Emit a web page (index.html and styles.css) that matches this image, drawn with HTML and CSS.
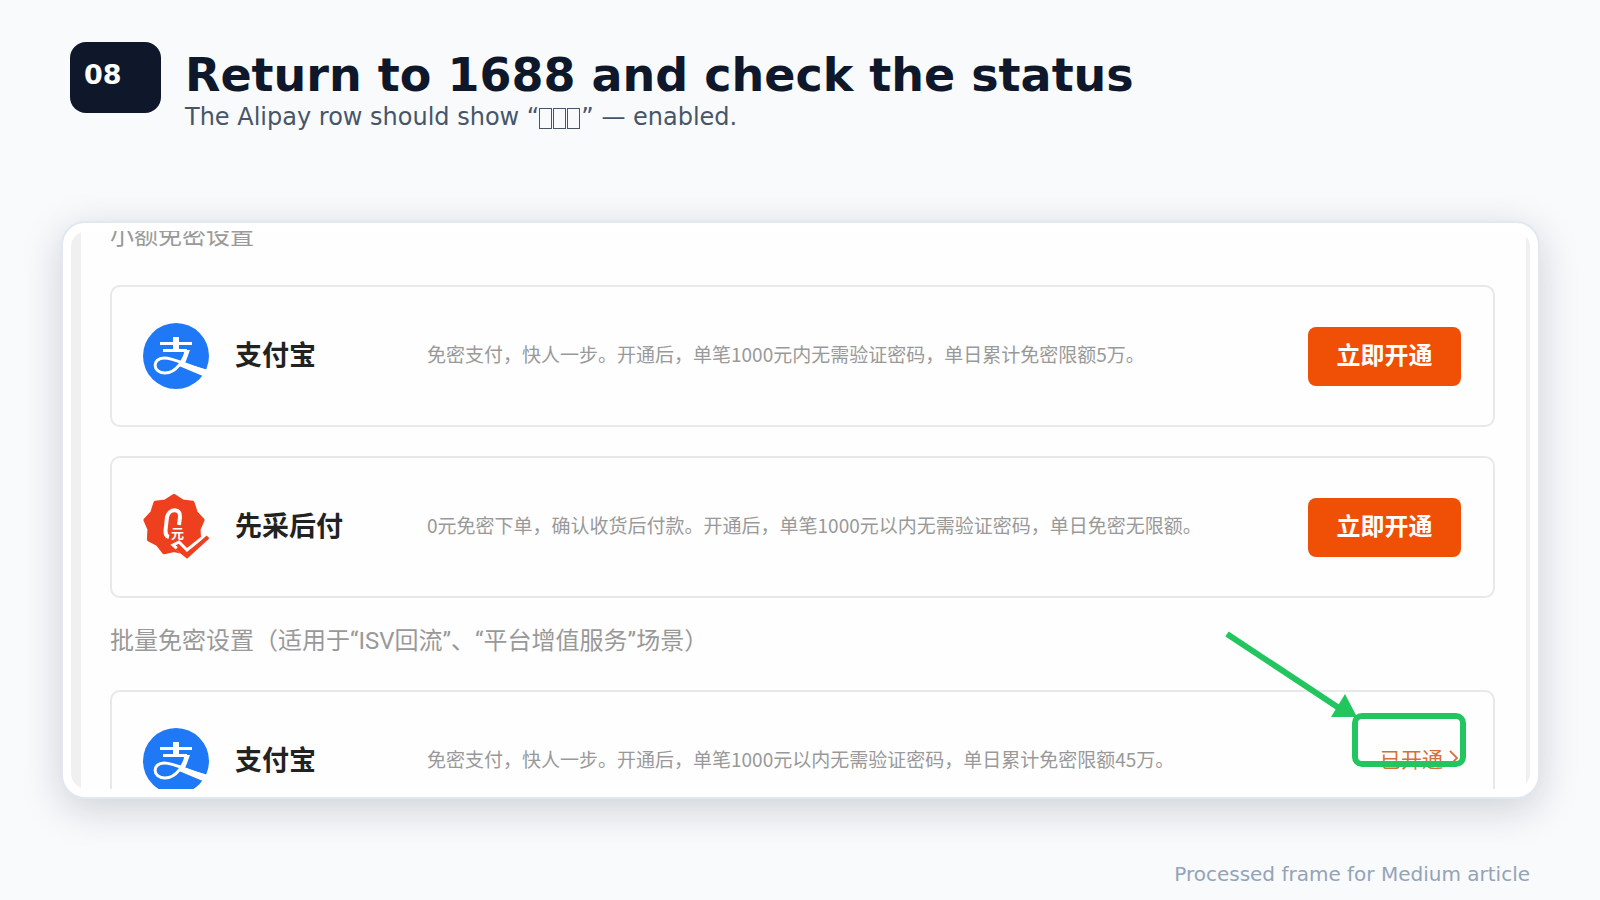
FILE: index.html
```html
<!DOCTYPE html>
<html lang="en">
<head>
    <meta charset="UTF-8">
    <meta name="viewport" content="width=device-width, initial-scale=1.0">
    <title>Return to 1688 and check the status</title>
    <link rel="stylesheet" href="styles.css">
</head>
<body>
    <header class="header">
        <div class="step">08</div>
        <div class="titles">
            <h1>Return to 1688 and check the status</h1>
            <p>The Alipay row should show “<span class="box"></span><span class="box"></span><span class="box"></span>” — enabled.</p>
        </div>
    </header>

    <main class="card">
        <div class="shot" lang="zh-CN">
            <h2>小额免密设置</h2>
            <section class="row">
                <svg class="icon" viewBox="0 0 66 66" aria-hidden="true">
                    <circle cx="33" cy="33" r="33" fill="#1f78f5"/>
                    <path d="M17 20.5H49M20 27.500H44" fill="none" stroke="#fff" stroke-width="3"/>
                    <path d="M30 14h6v14h-6z" fill="#fff"/>
                    <path d="M44 27C41 36 34 50 22 50C9 50 9 35 21 35C31 35 40 41 62 48" fill="none" stroke="#fff" stroke-width="3"/>
                    <path d="M41 27h6C45 32 44 36 42 40L65 47L61 53.500L36 43C40 37 41 33 41 27z" fill="#fff"/>
                </svg>
                <h3>支付宝</h3>
                <p>免密支付，快人一步。开通后，单笔1000元内无需验证密码，单日累计免密限额5万。</p>
                <button type="button" class="open-btn">立即开通</button>
            </section>
            <section class="row">
                <svg class="icon" viewBox="0 0 66 66" aria-hidden="true">
                    <path d="M31 2L39.600 7.500L49.600 8.800L52.700 18.500L59.600 26L55.600 35.300L56.100 45.500L47.100 50.200L40.900 58.300L31 56L21.100 58.300L14.900 50.200L5.900 45.500L6.400 35.300L2.400 26L9.300 18.500L12.400 8.800L22.400 7.500z" fill="#ee3f1f" stroke="#ee3f1f" stroke-width="4" stroke-linejoin="round"/>
                    <path d="M26 43C22 42 22 38 23 32L24 23C26 14 38 14 37 23L36 31" fill="none" stroke="#fff" stroke-width="4"/>
                    <text class="yuan" x="28" y="44">元</text>
                    <path d="M30 51L36 48L44 56L64 40L66 43L45 64z" fill="#ee3f1f" stroke="#fff" stroke-width="3"/>
                    <path d="M34 54L44 62L65 43" fill="none" stroke="#ee3f1f" stroke-width="4"/>
                </svg>
                <h3>先采后付</h3>
                <p>0元免密下单，确认收货后付款。开通后，单笔1000元以内无需验证密码，单日免密无限额。</p>
                <button type="button" class="open-btn">立即开通</button>
            </section>

            <h2>批量免密设置（适用于“ISV回流”、“平台增值服务”场景）</h2>
            <section class="row">
                <svg class="icon" viewBox="0 0 66 66" aria-hidden="true">
                    <circle cx="33" cy="33" r="33" fill="#1f78f5"/>
                    <path d="M17 20.5H49M20 27.500H44" fill="none" stroke="#fff" stroke-width="3"/>
                    <path d="M30 14h6v14h-6z" fill="#fff"/>
                    <path d="M44 27C41 36 34 50 22 50C9 50 9 35 21 35C31 35 40 41 62 48" fill="none" stroke="#fff" stroke-width="3"/>
                    <path d="M41 27h6C45 32 44 36 42 40L65 47L61 53.500L36 43C40 37 41 33 41 27z" fill="#fff"/>
                </svg>
                <h3>支付宝</h3>
                <p>免密支付，快人一步。开通后，单笔1000元以内无需验证密码，单日累计免密限额45万。</p>
                <a href="#" class="status">已开通
                    <svg viewBox="0 0 10 18" aria-hidden="true"><path d="M1 1L9 9L1 17" fill="none" stroke="currentColor" stroke-width="2"/></svg>
                </a>
            </section>

            <!-- highlight drawn over the status link -->
            <svg class="marker" viewBox="0 0 270 160" aria-hidden="true">
                <path d="M17 14L132 90" stroke="#22c55e" stroke-width="6"/>
                <path d="M135 74L121 97H147z" fill="#22c55e"/>
                <rect x="145" y="96" width="108" height="48" rx="7" fill="none" stroke="#22c55e" stroke-width="6"/>
            </svg>
        </div>
    </main>

    <footer class="footer">Processed frame for Medium article</footer>
</body>
</html>
```

FILE: styles.css
```css
* {
    box-sizing: border-box;
}

body {
    display: flex;
    flex-direction: column;
    height: 100vh;
    margin: 0;
    padding: 42px 60px 12px;
    background-color: #f8fafc;
    color: #0f172a;
    font-family: "DejaVu Sans", sans-serif;
}

h1, h2, h3, p {
    margin: 0;
}

.header {
    display: flex;
    gap: 24px;
    padding-left: 10px;
    margin-bottom: 89px;
}

.step {
    width: 91px;
    height: 71px;
    padding: 17px 14px;
    border-radius: 16px;
    background-color: #0f172a;
    color: #fff;
    font-size: 27px;
    font-weight: bold;
    line-height: 32px;
}

.titles {
    padding-top: 6px;
}

h1 {
    font-size: 46px;
    line-height: 54px;
}

.titles p {
    color: #475569;
    font-size: 24px;
    line-height: 30px;
}

.box {
    display: inline-block;
    width: 13px;
    height: 21px;
    margin-right: 1px;
    border: 1px solid #475569;
    vertical-align: -4px;
}

.card {
    flex: 1;
    min-height: 0;
    margin: 0 0 1px 1px;
    padding: 8px;
    border: 2px solid #e2e8f0;
    border-radius: 24px;
    background-color: #fff;
    box-shadow: 0 10px 40px rgba(15, 23, 42, 0.18);
}

/* clipped page inside the card */
.shot {
    position: relative;
    height: 100%;
    padding: 0 35px 0 39px;
    overflow: hidden;
    border-radius: 16px;
    background: linear-gradient(90deg, #f0f0f0 10px, #fefefe 10px, #fefefe calc(100% - 4px), #f0f0f0 calc(100% - 4px));
    font-family: "Noto Sans CJK SC", sans-serif;
}

h2 {
    margin: 27px 0 33px;
    color: #999;
    font-family: Roboto, "Noto Sans CJK SC", sans-serif;
    font-size: 24px;
    font-weight: normal;
    line-height: 32px;
}

h2:first-child {
    margin-top: -11px;
}

.row {
    display: grid;
    grid-template-columns: 92px 192px 1fr auto;
    align-items: center;
    height: 142px;
    padding: 0 32px 0 31px;
    border: 2px solid #e8e8e8;
    border-radius: 10px;
}

.row + .row {
    margin-top: 29px;
}

.icon {
    width: 66px;
    height: 66px;
}

.yuan {
    fill: #fff;
    font-size: 13px;
    font-weight: bold;
}

h3 {
    padding-bottom: 4px;
    color: #222;
    font-size: 27px;
    line-height: 36px;
}

.row p {
    padding-bottom: 4px;
    color: #999;
    font-size: 19px;
    line-height: 28px;
    white-space: nowrap;
}

.open-btn {
    width: 153px;
    height: 59px;
    padding: 0 0 6px;
    border: 0;
    border-radius: 8px;
    background-color: #f05005;
    color: #fff;
    font-family: inherit;
    font-size: 24px;
    font-weight: bold;
}

.status {
    display: flex;
    align-items: center;
    gap: 6px;
    padding: 0 3px 6px 0;
    color: #d2703c;
    font-size: 21px;
    text-decoration: none;
}

.status svg {
    width: 9px;
    height: 16px;
}

.marker {
    position: absolute;
    right: 50px;
    bottom: 9px;
    width: 270px;
    height: 160px;
}

.footer {
    padding-right: 10px;
    margin-top: 60px;
    color: #94a3b8;
    font-size: 20px;
    line-height: 28px;
    text-align: right;
}
```
